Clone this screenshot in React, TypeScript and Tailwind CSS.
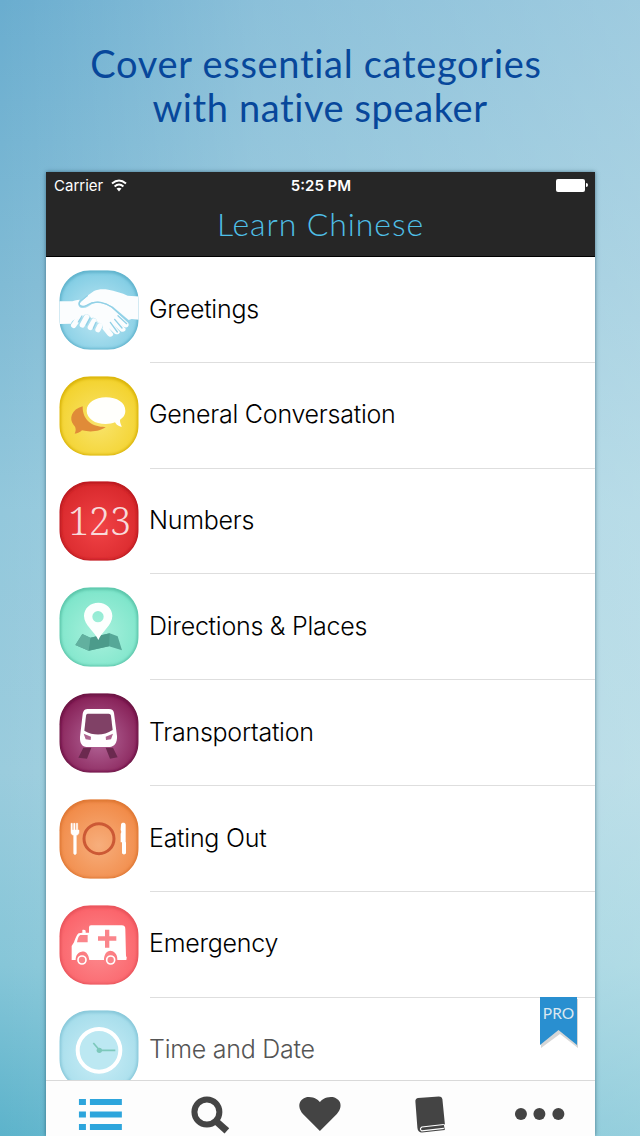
import React from "react";

interface IconTileProps {
    id: string;
    light: string;
    base: string;
    edge: string;
    children: React.ReactNode;
}

const TILE_PATH =
    "M122 29H174C226 29 267 70 267 122V174C267 226 226 267 174 267H122C70 267 29 226 29 174V122C29 70 70 29 122 29Z";

// Rounded tile with a soft inner shadow, the glyph goes on top
function IconTile({ id, light, base, edge, children }: IconTileProps) {
    return (
        <svg viewBox="28 28 240 240" className="h-20 w-20 shrink-0">
            <defs>
                <radialGradient id={`${id}-fill`} cx="50%" cy="58%" r="58%">
                    <stop offset="0" stopColor={light} />
                    <stop offset="1" stopColor={base} />
                </radialGradient>
                <clipPath id={`${id}-clip`}>
                    <path d={TILE_PATH} />
                </clipPath>
                <filter id={`${id}-blur`}>
                    <feGaussianBlur stdDeviation="5" />
                </filter>
            </defs>
            <g clipPath={`url(#${id}-clip)`}>
                <path d={TILE_PATH} fill={`url(#${id}-fill)`} />
                <path
                    d={TILE_PATH}
                    fill="none"
                    stroke={edge}
                    strokeWidth="9"
                    transform="translate(0 2)"
                    filter={`url(#${id}-blur)`}
                />
                {children}
            </g>
        </svg>
    );
}

function GreetingsIcon() {
    return (
        <IconTile id="greetings" light="#bfe7f3" base="#82cde4" edge="#57acc6">
            <path
                d="M272 108L234 105C218 97 194 90 176 87C158 84 144 86 133 91L113 105C106 114 94 122 89 130C91 138 106 138 115 132C124 125 138 121 149 123C164 126 178 131 190 138L237 178L246 175L272 178Z"
                fill="#fbfdfe"
            />
            <path
                d="M25 122L60 122C72 122 80 117 91 117C83 127 84 139 96 142C108 144 118 137 126 131C143 122 169 130 184 139L235 186C241 195 233 204 223 199L206 184L228 204C229 213 219 217 211 210L193 194L211 214C209 222 199 224 192 216L177 202L191 220C189 230 179 231 173 223L158 204C164 195 154 184 144 187C143 176 134 168 124 173C119 160 108 156 99 168L88 178C76 173 65 181 64 189L25 190Z"
                fill="#fbfdfe"
            />
            <g stroke="#fbfdfe" strokeWidth="16" strokeLinecap="round">
                <path d="M80 183L72 194" />
                <path d="M111 169L98 193" />
                <path d="M133 181L122 200" />
                <path d="M151 195L145 207" />
            </g>
            <g stroke="#91d0e6" strokeWidth="4" strokeLinecap="round" fill="none">
                <path d="M113 105L91 122C83 135 98 141 111 134C139 116 169 127 187 140L240 186" />
                <path d="M205 165L231 189M195 176L217 202M182 185L203 214M97 166L86 184M121 172L110 193M139 185L131 203" />
            </g>
        </IconTile>
    );
}

function ConversationIcon() {
    return (
        <IconTile id="conversation" light="#f9e46d" base="#f3d22c" edge="#d3ac00">
            <path d="M99 119C65 128 57 157 72 175C80 183 79 193 75 201C84 200 92 196 97 191C124 198 154 193 168 181C135 182 98 166 99 119Z" fill="#e08b38" />
            <path d="M169 92C202 92 227 108 227 132C227 145 220 153 211 159C210 169 216 175 216 181C204 178 200 174 196 167C188 171 179 172 168 172C136 172 111 155 111 132C111 109 136 92 169 92Z" fill="#fffffc" />
        </IconTile>
    );
}

function NumbersIcon() {
    return (
        <IconTile id="numbers" light="#f14346" base="#d8282c" edge="#b3151a">
            <text x="150" y="191" textAnchor="middle" textLength="190" fontSize="115" fill="#f8dada" className="font-['Noto_Serif','DejaVu_Serif',serif] font-light">
                123
            </text>
        </IconTile>
    );
}

function PlacesIcon() {
    return (
        <IconTile id="places" light="#a9f1dd" base="#7de5ca" edge="#52bda2">
            <path d="M98 169L122 180L180 167L204 176L217 218L178 206L117 219L77 202Z" fill="#56a898" />
            <path d="M122 180L180 167L178 206L117 219Z" fill="#4c9b8b" />
            <path d="M98 169L122 180L117 219L77 202Z" fill="#62b09f" />
            <path d="M146 187C136 162 103 143 103 115C103 91 123 75 146 75C169 75 188 92 188 115C188 143 156 162 146 187ZM145 100A17 17 0 1 0 145 134A17 17 0 1 0 145 100Z" fill="#fcfffe" fillRule="evenodd" />
        </IconTile>
    );
}

function TransportIcon() {
    return (
        <IconTile id="transport" light="#b4689a" base="#861f56" edge="#640f3d">
            <path d="M101 192L125 192L112 225L86 222ZM168 192L190 192L204 221L181 225Z" fill="#6b294f" />
            <path d="M116 76H178C187 76 192 80 193 88L202 157C203 178 194 189 180 190H111C98 190 90 179 91 160L99 91C101 80 106 76 116 76Z" fill="#fff" />
            <path d="M114 90H177C181 90 183 92 184 96L189 139Q147 165 104 141L109 96C110 92 111 90 114 90Z" fill="#804166" />
            <path d="M102 150L124 159L123 169L108 167ZM190 150L168 159L169 169L184 167Z" fill="#ae6590" />
        </IconTile>
    );
}

function EatingIcon() {
    return (
        <IconTile id="eating" light="#f7ae7c" base="#f18a47" edge="#d9722e">
            <circle cx="148" cy="147" r="45" fill="none" stroke="#cc5935" strokeWidth="9" />
            <path d="M64 101H68V121H72V101H76V121H80V101H84V121H88V128C88 134 83 137 80 137V190C80 196 72 196 72 190V137C67 136 64 133 64 128Z" fill="#fff" stroke="#fff" strokeWidth="1.5" />
            <path d="M214 105C214 98 227 97 228 105V158H229V190C229 195 218 196 217 190V158H213V132L215 127L213 120Z" fill="#fff" />
        </IconTile>
    );
}

function EmergencyIcon() {
    return (
        <IconTile id="emergency" light="#fc8a8e" base="#fb636a" edge="#e34f57">
            <path d="M118 95Q118 89 124 89H216C224 89 227 92 227 101L229 181Q233 184 230 193H203C204 173 191 165 182 165C171 165 163 176 163 193H119C116 173 107 166 96 168C86 169 78 178 78 193H66V151L73 140C77 129 82 116 87 113L98 111V103C101 101 106 102 108 105V111L118 111Z" fill="#fff" />
            <path d="M92 118H114V140H82C84 130 86 121 92 118ZM166 102H179V122H200V135H179V156H166V135H145V122H166Z" fill="#fa858b" />
            <g fill="#f98489" stroke="#fff" strokeWidth="5">
                <circle cx="97" cy="193" r="12" />
                <circle cx="183" cy="193" r="12" />
            </g>
        </IconTile>
    );
}

function ClockIcon() {
    return (
        <IconTile id="clock" light="#cbeef7" base="#a6ddeb" edge="#80c2d5">
            <circle cx="148" cy="149" r="64" fill="#bce8f2" stroke="#fff" strokeWidth="12" />
            <g stroke="#7cc8bb" strokeWidth="5" fill="none">
                <path d="M131 127L149 148" />
                <path d="M149 149H197" />
            </g>
            <circle cx="149" cy="149" r="8" fill="#7cc8bb" />
        </IconTile>
    );
}

const categories = [
    { label: "Greetings", Icon: GreetingsIcon },
    { label: "General Conversation", Icon: ConversationIcon },
    { label: "Numbers", Icon: NumbersIcon },
    { label: "Directions & Places", Icon: PlacesIcon },
    { label: "Transportation", Icon: TransportIcon },
    { label: "Eating Out", Icon: EatingIcon },
    { label: "Emergency", Icon: EmergencyIcon },
    { label: "Time and Date", Icon: ClockIcon, pro: true },
];

function ProRibbon() {
    return (
        <div className="absolute -top-px right-[15px] h-[52px] w-[42px]">
            <svg viewBox="0 0 42 52" className="absolute inset-0 h-full w-full">
                <path d="M2 1H39V50L21 36L2 50Z" fill="#777" opacity="0.3" transform="translate(1 1)" />
                <path d="M2 0H39V48L20.5 33L2 48Z" fill="#298fd0" />
            </svg>
            <span className="relative flex h-[35px] items-center justify-center pr-px font-['Lato',sans-serif] text-[15.5px] text-[#dce8f0]">PRO</span>
        </div>
    );
}

function StatusBar() {
    return (
        <div className="grid h-7 grid-cols-3 items-center pr-[7px] pl-2 text-white">
            <div className="flex items-center gap-2 font-['Inter',sans-serif] text-[15px]">
                Carrier
                <svg viewBox="0 0 16 13" className="mb-0.5 h-[13px] w-4" fill="none" stroke="white" strokeWidth="2">
                    <path d="M1 4.5Q8-1.5 15 4.5M3.6 7.5Q8 3.6 12.4 7.5" />
                    <path d="M5.5 9.6Q8 7.8 10.5 9.6L8 12.4Z" fill="white" stroke="none" />
                </svg>
            </div>
            <div className="text-center font-['Inter',sans-serif] text-[15px] font-semibold">5:25 PM</div>
            <div className="mb-0.5 flex items-center justify-end gap-px">
                <div className="h-[13px] w-[29px] rounded-[2px] bg-white" />
                <div className="h-1 w-[2px] rounded-r bg-white" />
            </div>
        </div>
    );
}

function TabBar() {
    return (
        <nav className="grid h-14 shrink-0 grid-cols-5 border-t border-[#d9d9d9] bg-[#fdfdfd]">
            <svg viewBox="0 0 110 56" className="h-14 w-full" fill="#2da5dc">
                <path d="M33 18h7v6h-7zM44 18h32v6H44zM33 30.500h7v6h-7zM44 30.500h32v6H44zM33 43h7v6h-7zM44 43h32v6H44z" />
            </svg>
            <svg viewBox="0 0 110 56" className="h-14 w-full" fill="none" stroke="#444">
                <circle cx="51" cy="31" r="12.500" strokeWidth="6" />
                <path d="M60.500 40.500L71 50" strokeWidth="7" />
            </svg>
            <svg viewBox="0 0 110 56" className="h-14 w-full" fill="#444">
                <path d="M54 50L37 33C29 23 36 16 43 16C49 16 52 19 54 21C56 19 59 16 65 16C73 16 79 24 71 33Z" />
            </svg>
            <svg viewBox="-5 0 110 56" className="h-14 w-full">
                <path d="M38 17L59 15.500Q62 15.500 62.500 18L65 43L64 44L65 49L42 51.500Q38 51.500 37.500 47L35.500 21Q35 18 38 17Z" fill="#444" />
                <path d="M64 43.500L42 46Q39 48 42 50L64 47.500" fill="none" stroke="white" strokeWidth="1.200" />
            </svg>
            <svg viewBox="0 0 110 56" className="h-14 w-full" fill="#444">
                <circle cx="36" cy="33" r="6" />
                <circle cx="54.500" cy="33" r="6" />
                <circle cx="73.500" cy="33" r="6" />
            </svg>
        </nav>
    );
}

export default function App() {
    return (
        <div className="h-[1136px] w-[640px] overflow-hidden bg-linear-[180deg,#6aadcf_0%,#80bbd5_25%,#93c8dc_45%,#9accdd_68%,#86c6d8_85%,#5cb3cb_100%]">
            <div className="flex h-full flex-col bg-linear-[90deg,rgba(248,255,252,0)_0%,rgba(248,255,252,0.23)_40%,rgba(248,255,252,0.37)_100%]">
                <h1 className="flex h-[172px] shrink-0 flex-col pt-[41px] text-center font-['Lato',sans-serif] text-[38px] leading-[44px] text-[#07479b]">
                    <span className="pr-[8px] tracking-[0.7px]">Cover essential categories</span>
                    <span className="tracking-[0.6px]">with native speaker</span>
                </h1>

                <main className="mr-[45px] ml-[46px] flex min-h-0 flex-1 flex-col bg-white shadow-[0_0_4px_rgba(20,60,80,0.6)]">
                    <header className="h-[85px] shrink-0 border-b border-black bg-[#262626]">
                        <StatusBar />
                        <h2 className="text-center font-['Lato',sans-serif] text-[32px] leading-[48px] font-light tracking-[0.9px] text-[#4fbfe6]">
                            Learn Chinese
                        </h2>
                    </header>

                    <ul className="min-h-0 flex-1 overflow-hidden">
                        {categories.map(({ label, Icon, pro }) => (
                            <li key={label} className="relative flex h-[105.8px] items-center gap-[11px] pl-[13px]">
                                <Icon />
                                <div
                                    className={`flex h-full flex-1 items-center border-b border-[#dedede] font-['Inter',sans-serif] text-[25px] font-light tracking-[-0.25px] ${pro ? "text-[#555]" : "text-black"}`}
                                >
                                    <span className="-ml-px">{label}</span>
                                </div>
                                {pro && <ProRibbon />}
                            </li>
                        ))}
                    </ul>

                    <TabBar />
                </main>
            </div>
        </div>
    );
}
